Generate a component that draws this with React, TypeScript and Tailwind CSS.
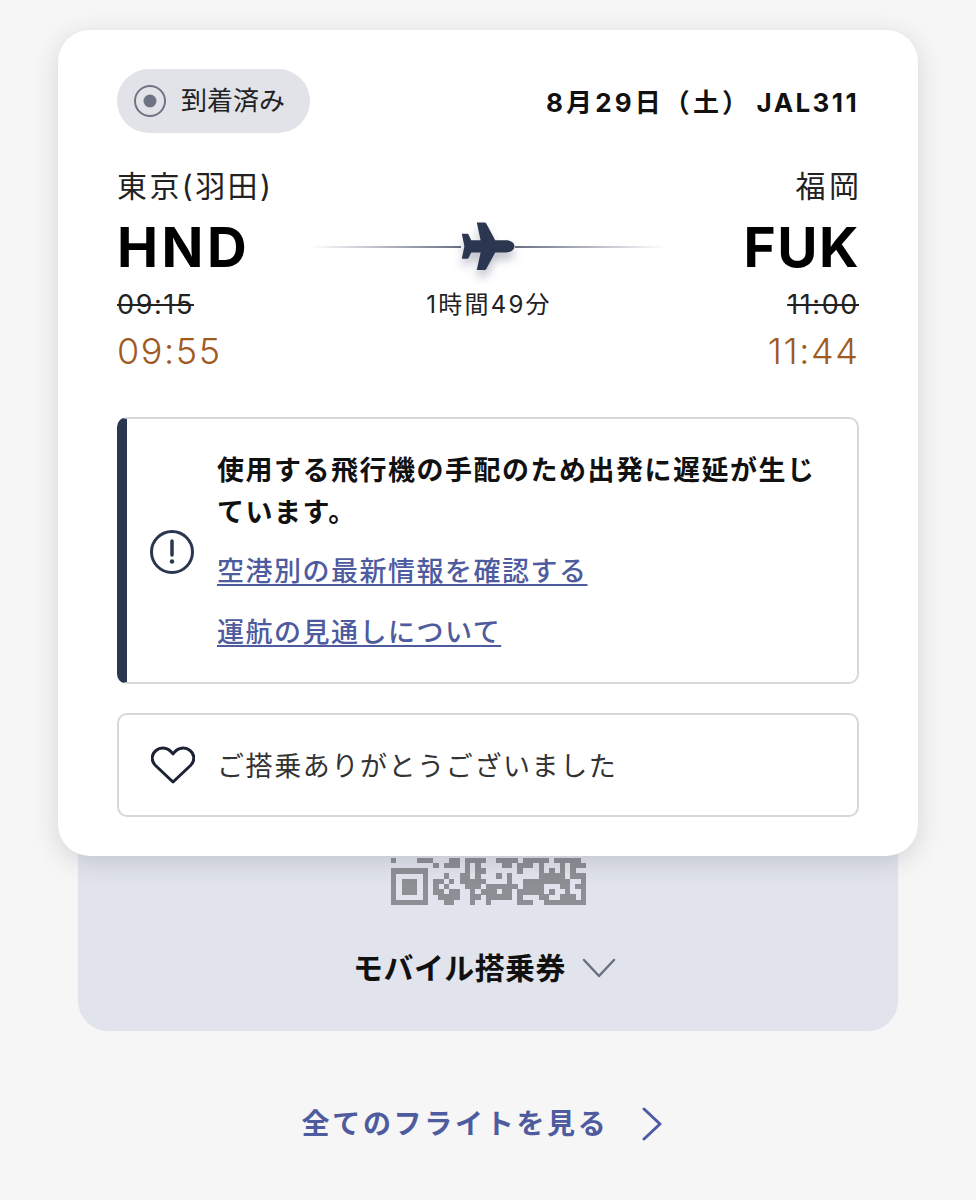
const QR = [
  "#....###...##.####..####.#####.#####.",
  "........#.###.#.#....##.###.#...#.###",
  "#######.......#.##......#...#.#.#.#..",
  "#.....#...#..##.#...#.#.....#####.###",
  "#.###.#.##.#.#####....#..#########..#",
  "#.###.#.#.#...###.######.####...##.##",
  "#.###.#.##.##..#.###.##.#####.#..#..#",
  "#.....#..####..##.#####.#...##..###.#",
  "#######...##...#..#.....###..########",
];

function QRCode() {
  return (
    <svg width="195" height="49" viewBox="0 0 195 49" className="block" shapeRendering="crispEdges">
      {QR.map((row, r) =>
        row.split("").map((c, i) =>
          c === "#" ? (
            <rect key={`${r}-${i}`} x={i * 5.27} y={49 - (9 - r) * 5.27} width="5.4" height="5.4" fill="#8d8f94" />
          ) : null
        )
      )}
    </svg>
  );
}

function Plane() {
  return (
    <svg width="54" height="49" viewBox="0 0 54 49" className="shrink-0 drop-shadow-[0_7px_5px_rgba(30,40,70,0.28)]">
      <path
        fill="#2b3650"
        d="M53.5 24.3C53.5 20.6 49.5 18.2 45 18.2L34.2 18.2L25.4 1.8Q24.8.6 23.4.6L15.8.6L19.6 18.2L10.2 18.2L7.8 13Q7.2 11.8 6 11.8L.8 11.8L3.4 24.3L.8 36.8L6 36.8Q7.2 36.8 7.8 35.6L10.2 30.4L19.6 30.4L15.8 48L23.4 48Q24.8 48 25.4 46.8L34.2 30.4L45 30.4C49.5 30.4 53.5 28 53.5 24.3Z"
      />
    </svg>
  );
}

export default function App() {
  return (
    <div className="min-h-[1200px] overflow-hidden bg-[#f6f6f6] px-[58px] pt-[30px] font-['Inter','Noto_Sans_CJK_JP',sans-serif] text-black">
      <div className="relative z-10 rounded-[32px] bg-white px-[59px] pb-[39px] pt-[39px] shadow-[0_6px_26px_rgba(40,45,60,0.16)]">
        <div className="flex items-center justify-between">
          <div className="flex h-[64px] w-[193px] items-center rounded-full bg-[#e2e3e8] pl-[17px]">
            <svg width="32" height="32" viewBox="0 0 32 32" className="shrink-0">
              <circle cx="16" cy="16" r="15" fill="none" stroke="#6f7484" strokeWidth="2" />
              <circle cx="16" cy="16" r="6.5" fill="#6f7484" />
            </svg>
            <span className="ml-[15px] text-[26px] leading-[32px] font-normal text-[#222]">到着済み</span>
          </div>
          <div className="flex items-center gap-[5.5px] pt-[3px] text-[26px] leading-[32px] font-bold text-[#111]">
            <span className="tracking-[3.1px]">8月29日（土）</span>
            <span className="tracking-[2.4px]">JAL311</span>
          </div>
        </div>

        <div className="mt-[33px] grid grid-cols-[193px_355px_1fr]">
          <div>
            <div className="text-[30px] leading-[40px] font-normal tracking-[2.4px] text-[#222]">東京(羽田)</div>
            <div className="mt-[11px] text-[55px] leading-[60px] font-bold tracking-[3.5px]">HND</div>
            <div className="mt-[8px] text-[27px] leading-[40px] font-normal tracking-[1.6px] text-[#222] line-through">09:15</div>
            <div className="mt-[4px] text-[36px] leading-[44px] font-light tracking-[1.6px] text-[#a05a1f]">09:55</div>
          </div>
          <div className="flex flex-col items-center pt-[56px]">
            <div className="flex w-full items-center">
              <div className="h-[2px] flex-1 bg-gradient-to-r from-transparent to-[#6a6f85]" />
              <Plane />
              <div className="h-[2px] flex-1 bg-gradient-to-l from-transparent to-[#6a6f85]" />
            </div>
            <div className="mt-[18px] pl-[3px] text-[24px] leading-[32px] font-normal tracking-[2.2px] text-[#222]">1時間49分</div>
          </div>
          <div className="text-right">
            <div className="-mr-[3.5px] text-[30px] leading-[40px] font-normal tracking-[3.5px] text-[#222]">福岡</div>
            <div className="mt-[11px] -mr-[1px] text-[55px] leading-[60px] font-bold tracking-[1.5px]">FUK</div>
            <div className="mt-[8px] text-[27px] leading-[40px] font-normal tracking-[1.6px] text-[#222] line-through">11:00</div>
            <div className="mt-[4px] -mr-[0.6px] text-[36px] leading-[44px] font-light tracking-[1.6px] text-[#a05a1f]">11:44</div>
          </div>
        </div>

        <div className="mt-[44px] flex items-center rounded-[10px] border-2 border-l-[10px] border-[#d8d8d8] border-l-[#2b3650] pb-[28px] pl-[23px] pr-[30px] pt-[31px]">
          <svg width="44" height="44" viewBox="0 0 44 44" className="shrink-0" fill="none" stroke="#2b3650">
            <circle cx="22" cy="22" r="20.5" strokeWidth="3" />
            <path d="M22 11V25" strokeWidth="3.5" strokeLinecap="round" />
            <circle cx="22" cy="31.5" r="2.2" fill="#2b3650" stroke="none" />
          </svg>
          <div className="ml-[23px] min-w-0 flex-1">
            <p className="text-[27px] leading-[42px] font-semibold tracking-[1.5px] text-[#111]">
              使用する飛行機の手配のため出発に遅延が生じています。
            </p>
            <a className="mt-[17px] block text-[27px] leading-[42px] font-medium tracking-[1.5px] text-[#4e5b9e] underline underline-offset-[3px]">
              空港別の最新情報を確認する
            </a>
            <a className="mt-[19px] block text-[27px] leading-[42px] font-medium tracking-[1.5px] text-[#4e5b9e] underline underline-offset-[3px]">
              運航の見通しについて
            </a>
          </div>
        </div>

        <div className="mt-[29px] flex h-[104px] items-center rounded-[10px] border-2 border-[#d8d8d8] pl-[32px]">
          <svg width="44" height="38" viewBox="0 0 44 38" className="shrink-0" fill="none" stroke="#1c2233" strokeWidth="3" strokeLinejoin="round">
            <path d="M22 36L4.5 19.5C-.5 14.5.5 8 5 4.5C10 .5 17.5 1.5 22 8C26.5 1.5 34 .5 39 4.5C43.5 8 44.5 14.5 39.5 19.5Z" />
          </svg>
          <span className="ml-[22px] pt-[3px] text-[27px] leading-[40px] font-normal tracking-[1.6px] text-[#333]">ご搭乗ありがとうございました</span>
        </div>
      </div>

      <div className="mx-[20px] -mt-[30px] flex flex-col items-center rounded-b-[30px] bg-[#e1e4ec] pb-[43px] pt-[30px]">
        <QRCode />
        <div className="mt-[43px] -ml-[7px] flex h-[40px] items-center">
          <span className="text-[30px] leading-[40px] font-semibold tracking-[0.4px] text-[#111]">モバイル搭乗券</span>
          <svg width="34" height="20" viewBox="0 0 34 20" className="ml-[16px]" fill="none" stroke="#6b7080" strokeWidth="2.5" strokeLinecap="round" strokeLinejoin="round">
            <path d="M2 2L17 18L32 2" />
          </svg>
        </div>
      </div>

      <div className="mt-[73px] -ml-[12px] flex items-center justify-center">
        <span className="text-[28px] leading-[40px] font-semibold tracking-[2.7px] text-[#4e5b9e]">全てのフライトを見る</span>
        <svg width="22" height="34" viewBox="0 0 22 34" className="ml-[32px]" fill="none" stroke="#4e5b9e" strokeWidth="3" strokeLinecap="round" strokeLinejoin="round">
          <path d="M3 2L19 17L3 32" />
        </svg>
      </div>
    </div>
  );
}
